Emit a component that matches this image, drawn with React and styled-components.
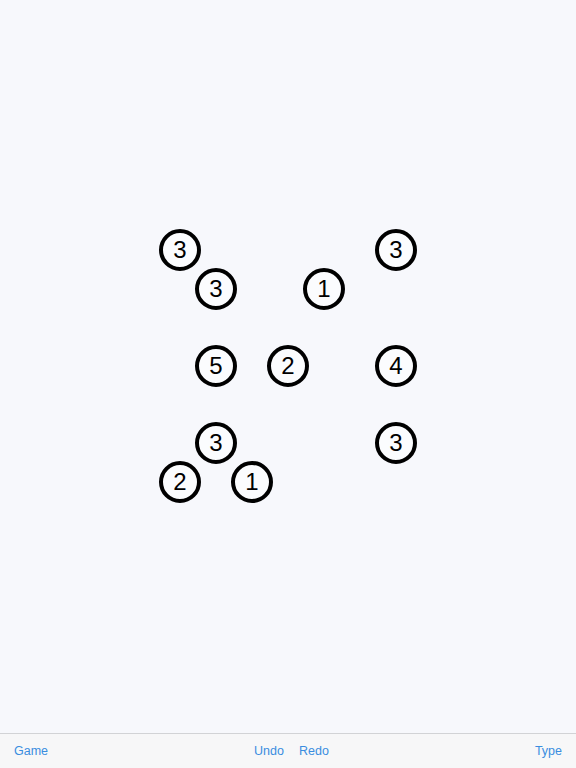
import React from "react";
import styled, { createGlobalStyle } from "styled-components";

const GlobalStyle = createGlobalStyle`
  html, body {
    margin: 0;
    padding: 0;
    background: #f7f8fc;
  }
  #root {
    height: 768px;
  }
`;

const Page = styled.div`
  display: flex;
  flex-direction: column;
  width: 576px;
  height: 768px;
  background: #f7f8fc;
  font-family: "Liberation Sans", Arial, sans-serif;
`;

const Board = styled.div`
  position: relative;
  flex: 1;
`;

const Island = styled.div`
  position: absolute;
  box-sizing: border-box;
  width: 42px;
  height: 42px;
  margin-left: -21px;
  margin-top: -21px;
  border: 4px solid #000;
  border-radius: 50%;
  background: #fbfcfe;
  display: flex;
  align-items: center;
  justify-content: center;
  font-size: 24px;
  color: #000;
`;

const Toolbar = styled.div`
  height: 34px;
  border-top: 1px solid #d2d3d6;
  background: #f7f7f8;
  display: flex;
  align-items: center;
  justify-content: space-between;
  padding: 0 14px;
`;

const Group = styled.div`
  display: flex;
  gap: 15px;
`;

const ToolButton = styled.span`
  color: #3a8de0;
  font-size: 12.5px;
  cursor: pointer;
`;

const COL = 36;
const ROW = 232 / 6;

const islands = [
  { c: 0, r: 0, n: 3 },
  { c: 6, r: 0, n: 3 },
  { c: 1, r: 1, n: 3 },
  { c: 4, r: 1, n: 1 },
  { c: 1, r: 3, n: 5 },
  { c: 3, r: 3, n: 2 },
  { c: 6, r: 3, n: 4 },
  { c: 1, r: 5, n: 3 },
  { c: 6, r: 5, n: 3 },
  { c: 0, r: 6, n: 2 },
  { c: 2, r: 6, n: 1 },
];

export default function App() {
  return (
    <>
      <GlobalStyle />
      <Page>
        <Board>
          {islands.map((i, k) => (
            <Island
              key={k}
              style={{ left: 180 + i.c * COL, top: 250 + i.r * ROW }}
            >
              {i.n}
            </Island>
          ))}
        </Board>
        <Toolbar>
          <ToolButton>Game</ToolButton>
          <Group>
            <ToolButton>Undo</ToolButton>
            <ToolButton>Redo</ToolButton>
          </Group>
          <ToolButton>Type</ToolButton>
        </Toolbar>
      </Page>
    </>
  );
}
